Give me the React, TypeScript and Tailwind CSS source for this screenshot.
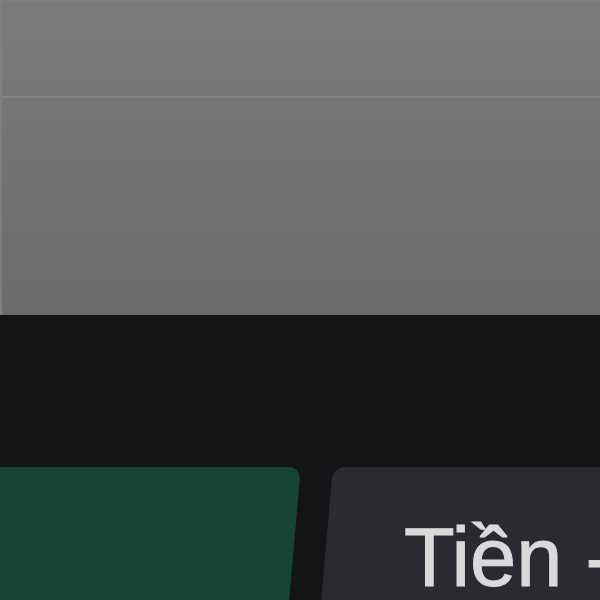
import React from "react";

const App = () => {
  return (
    <div className="w-[600px] h-[600px] overflow-hidden bg-[#141416] flex flex-col font-['Liberation_Sans',Arial,sans-serif]">
      <div className="h-[315px] shrink-0 flex flex-col bg-gradient-to-b from-[#7b7b7b] to-[#6b6b6b] border-t-2 border-l-2 border-[#7f7f7f]">
        <div className="h-[96px] border-b-2 border-[#828282]" />
        <div className="flex-1" />
      </div>
      <div className="h-[152px] shrink-0" />
      <div className="flex-1 flex gap-[32px]">
        <div className="relative w-[295px] shrink-0">
          <div className="absolute inset-0 -left-[40px] bg-[#164434] rounded-tr-[12px] -skew-x-[5deg]" />
        </div>
        <div className="relative w-[320px] shrink-0">
          <div className="absolute inset-0 -right-[40px] bg-[#2a2b30] rounded-tl-[12px] -skew-x-[5deg]" />
          <div className="relative pl-[77px] pt-[49px] text-[83px] leading-[83px] text-[#dadada] whitespace-nowrap [-webkit-text-stroke:1px_#dadada]">
            Tiền -
          </div>
        </div>
      </div>
    </div>
  );
};

export default App;
